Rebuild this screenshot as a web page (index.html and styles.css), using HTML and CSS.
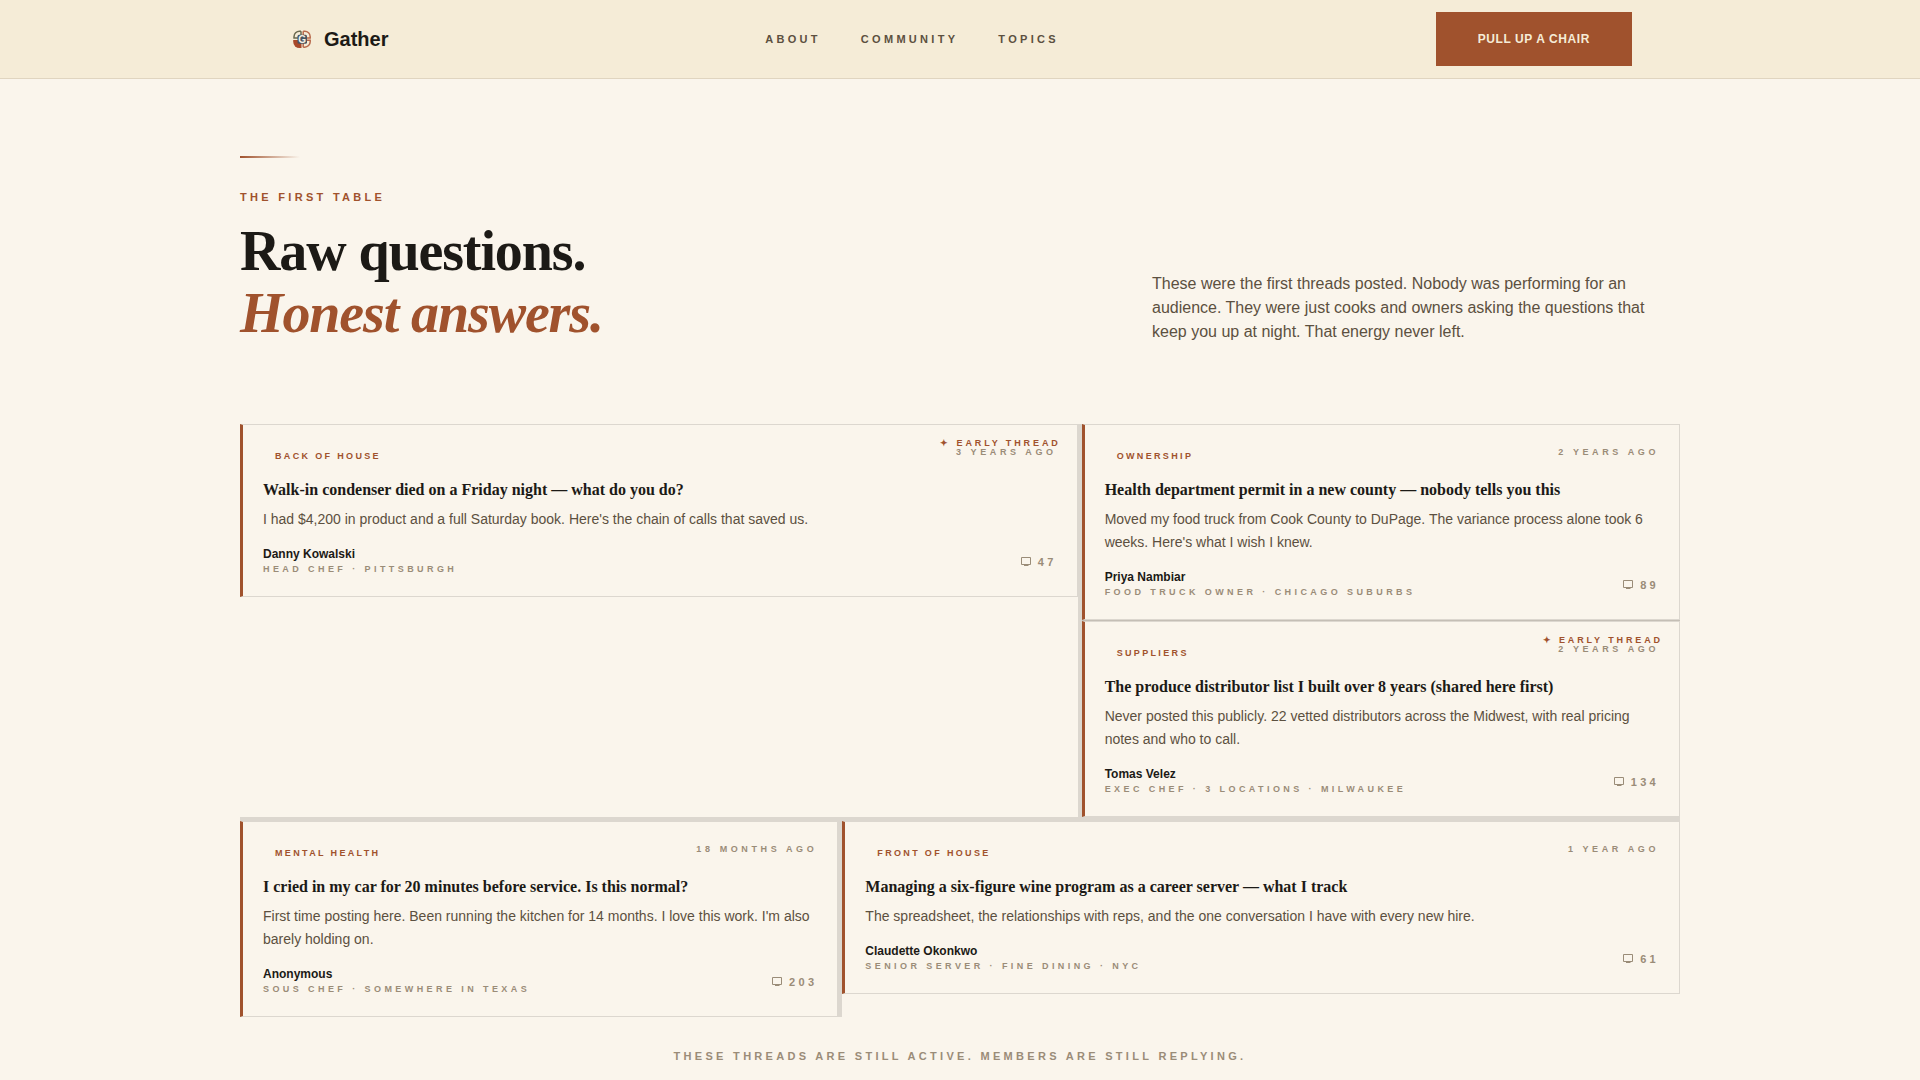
FILE: index.html
```html
<!DOCTYPE html>
<html lang="en">
<head>
  <meta charset="UTF-8">
  <meta name="viewport" content="width=device-width, initial-scale=1.0">
  <title>Gather</title>
  <link rel="stylesheet" href="styles.css">
</head>
<body>

  <!-- shared reply icon -->
  <svg class="sprite" aria-hidden="true">
    <symbol id="reply-icon" viewBox="0 0 12 12">
      <path d="M1.5 1.5h9v7h-9zM4 9.5h4.500" fill="none" stroke="currentColor"/>
    </symbol>
  </svg>

  <header class="site-header">
    <div class="nav-inner">
      <a class="brand" href="#">
        <svg class="brand-mark" viewBox="0 0 28 28" aria-hidden="true">
          <g fill="none" stroke-width="1.5">
            <path d="M13 6.200h-1.500a5.500 5.500 0 0 0-5.500 5.500V13h4M13 6.200V10" stroke="#6b6a50"/>
            <path d="M15.200 6.200h1.500a5.500 5.500 0 0 1 5.500 5.500V13h-4M15.200 6.200V10" stroke="#b86a4c"/>
            <path d="M15.200 22.200h1.500a5.500 5.500 0 0 0 5.500-5.500V15.200h-4M15.200 22.200V18" stroke="#b86a4c"/>
          </g>
          <path d="M5.200 15h8.300v8h-2a6.300 6.300 0 0 1-6.300-6.300z" fill="#a8492a"/>
          <rect x="9.500" y="9.700" width="9.500" height="9" rx="1.500" fill="#465663"/>
          <text class="brand-letter" x="14.200" y="17.700" text-anchor="middle">G</text>
        </svg>
        <span>Gather</span>
      </a>
      <nav class="nav-links">
        <a href="#about">About</a>
        <a href="#community">Community</a>
        <a href="#topics">Topics</a>
      </nav>
      <a class="btn" href="#join">Pull up a chair</a>
    </div>
  </header>

  <main class="container">
    <section class="intro">
      <div>
        <div class="rule"></div>
        <p class="eyebrow">The First Table</p>
        <h1>Raw questions.<br><em>Honest answers.</em></h1>
      </div>
      <p class="intro-text">These were the first threads posted. Nobody was performing for an audience. They were just cooks and owners asking the questions that keep you up at night. That energy never left.</p>
    </section>

    <section class="board">
      <div class="row wide-left">
        <div class="col">
          <article class="card">
            <span class="early">✦ Early thread</span>
            <div class="card-top">
              <span class="tag">Back of House</span>
              <time>3 years ago</time>
            </div>
            <h2>Walk-in condenser died on a Friday night — what do you do?</h2>
            <p class="excerpt">I had $4,200 in product and a full Saturday book. Here's the chain of calls that saved us.</p>
            <div class="card-foot">
              <div>
                <p class="author">Danny Kowalski</p>
                <p class="role">Head Chef · Pittsburgh</p>
              </div>
              <span class="replies"><svg aria-hidden="true"><use href="#reply-icon"/></svg>47</span>
            </div>
          </article>
        </div>
        <div class="col stack">
          <article class="card">
            <div class="card-top">
              <span class="tag">Ownership</span>
              <time>2 years ago</time>
            </div>
            <h2>Health department permit in a new county — nobody tells you this</h2>
            <p class="excerpt">Moved my food truck from Cook County to DuPage. The variance process alone took 6 weeks. Here's what I wish I knew.</p>
            <div class="card-foot">
              <div>
                <p class="author">Priya Nambiar</p>
                <p class="role">Food Truck Owner · Chicago Suburbs</p>
              </div>
              <span class="replies"><svg aria-hidden="true"><use href="#reply-icon"/></svg>89</span>
            </div>
          </article>
          <article class="card">
            <span class="early">✦ Early thread</span>
            <div class="card-top">
              <span class="tag">Suppliers</span>
              <time>2 years ago</time>
            </div>
            <h2>The produce distributor list I built over 8 years (shared here first)</h2>
            <p class="excerpt">Never posted this publicly. 22 vetted distributors across the Midwest, with real pricing notes and who to call.</p>
            <div class="card-foot">
              <div>
                <p class="author">Tomas Velez</p>
                <p class="role">Exec Chef · 3 Locations · Milwaukee</p>
              </div>
              <span class="replies"><svg aria-hidden="true"><use href="#reply-icon"/></svg>134</span>
            </div>
          </article>
        </div>
      </div>

      <div class="row wide-right">
        <div class="col">
          <article class="card">
            <div class="card-top">
              <span class="tag">Mental Health</span>
              <time>18 months ago</time>
            </div>
            <h2>I cried in my car for 20 minutes before service. Is this normal?</h2>
            <p class="excerpt">First time posting here. Been running the kitchen for 14 months. I love this work. I'm also barely holding on.</p>
            <div class="card-foot">
              <div>
                <p class="author">Anonymous</p>
                <p class="role">Sous Chef · Somewhere in Texas</p>
              </div>
              <span class="replies"><svg aria-hidden="true"><use href="#reply-icon"/></svg>203</span>
            </div>
          </article>
        </div>
        <div class="col">
          <article class="card">
            <div class="card-top">
              <span class="tag">Front of House</span>
              <time>1 year ago</time>
            </div>
            <h2>Managing a six-figure wine program as a career server — what I track</h2>
            <p class="excerpt">The spreadsheet, the relationships with reps, and the one conversation I have with every new hire.</p>
            <div class="card-foot">
              <div>
                <p class="author">Claudette Okonkwo</p>
                <p class="role">Senior Server · Fine Dining · NYC</p>
              </div>
              <span class="replies"><svg aria-hidden="true"><use href="#reply-icon"/></svg>61</span>
            </div>
          </article>
        </div>
      </div>
    </section>

    <p class="note">These threads are still active. Members are still replying.</p>
  </main>

</body>
</html>
```
FILE: styles.css
```css
:root {
  --cream: #faf5ec;
  --sand: #f5ecd7;
  --line: #dcd7cf;
  --rust: #a0522d;
  --ink: #1c1a16;
  --body: #5c5040;
  --muted: #9a8c78;
}

* {
  box-sizing: border-box;
  margin: 0;
  padding: 0;
}

body {
  background: var(--cream);
  color: var(--ink);
  font-family: "Liberation Sans", Arial, sans-serif;
  font-size: 16px;
  line-height: 24px;
}

a {
  color: inherit;
  text-decoration: none;
}

.sprite {
  display: none;
}

/* header */
.site-header {
  background: var(--sand);
  border-bottom: 1px solid #e0d5c0;
}

.nav-inner {
  max-width: 1440px;
  margin: 0 auto;
  padding: 12px 48px;
  display: flex;
  justify-content: space-between;
  align-items: center;
}

.brand {
  display: flex;
  align-items: center;
  gap: 8px;
  font-size: 20px;
  font-weight: bold;
}

.brand-mark {
  width: 28px;
  height: 28px;
}

.brand-letter {
  fill: #f7f1e6;
  font-size: 10px;
  font-weight: bold;
}

.nav-links {
  display: flex;
  gap: 40px;
  color: var(--body);
  font-size: 11px;
  font-weight: bold;
  letter-spacing: 0.3em;
  text-transform: uppercase;
}

.btn {
  padding: 15px 42px;
  background: var(--rust);
  color: var(--sand);
  font-size: 12px;
  font-weight: bold;
  letter-spacing: 0.05em;
  text-transform: uppercase;
}

/* intro */
.container {
  max-width: 1440px;
  margin: 0 auto;
}

.intro {
  display: grid;
  grid-template-columns: 5fr 3fr;
  gap: 32px;
  align-items: end;
  padding: 77px 0 80px;
}

.rule {
  width: 60px;
  height: 2px;
  margin-bottom: 32px;
  background: linear-gradient(to right, var(--rust), transparent);
}

.eyebrow {
  margin-bottom: 16px;
  color: var(--rust);
  font-size: 11px;
  font-weight: bold;
  line-height: 14px;
  letter-spacing: 0.3em;
  text-transform: uppercase;
}

h1 {
  font-family: "Liberation Serif", "Times New Roman", serif;
  font-size: 56px;
  line-height: 62px;
  letter-spacing: -0.02em;
}

h1 em {
  color: var(--rust);
}

.intro-text {
  color: var(--body);
}

/* threads: the board colour shows through the 4px gaps */
.board,
.row {
  display: grid;
  gap: 4px;
  background: var(--line);
}

.wide-left {
  grid-template-columns: 7fr 5fr;
}

.wide-right {
  grid-template-columns: 5fr 7fr;
}

.col {
  background: var(--cream);
}

.stack {
  display: grid;
  gap: 1px;
  background: #c4beb5;
}

.card {
  position: relative;
  padding: 20px;
  background: var(--cream);
  border: 1px solid var(--line);
  border-left: 3px solid var(--rust);
}

.card-top {
  display: flex;
  justify-content: space-between;
  align-items: flex-start;
  margin-bottom: 12px;
  font-size: 9px;
  font-weight: bold;
  line-height: 14px;
  text-transform: uppercase;
}

.tag {
  padding: 4px 12px;
  color: var(--rust);
  letter-spacing: 0.26em;
}

time {
  color: var(--muted);
  letter-spacing: 0.4em;
}

.early {
  position: absolute;
  top: 12px;
  right: 16px;
  color: var(--rust);
  font-size: 9px;
  font-weight: bold;
  line-height: 12px;
  letter-spacing: 0.32em;
  text-transform: uppercase;
}

h2 {
  margin-bottom: 8px;
  font-family: "Liberation Serif", "Times New Roman", serif;
  font-size: 16px;
  line-height: 21px;
}

.excerpt {
  margin-bottom: 16px;
  color: var(--body);
  font-size: 14px;
  line-height: 23px;
}

.card-foot {
  display: flex;
  justify-content: space-between;
  align-items: center;
}

.author {
  font-size: 12px;
  font-weight: bold;
  line-height: 15px;
}

.role {
  color: var(--muted);
  font-size: 9px;
  font-weight: bold;
  line-height: 14px;
  letter-spacing: 0.38em;
  text-transform: uppercase;
}

.replies {
  display: flex;
  align-items: center;
  gap: 6px;
  color: var(--muted);
  font-size: 11px;
  font-weight: bold;
  line-height: 14px;
  letter-spacing: 0.3em;
}

.replies svg {
  width: 12px;
  height: 12px;
}

.note {
  padding: 31px 0;
  color: var(--muted);
  font-size: 11px;
  font-weight: bold;
  line-height: 16px;
  letter-spacing: 0.3em;
  text-align: center;
  text-transform: uppercase;
}

@media (max-width: 900px) {
  .container {
    padding: 0 20px;
  }

  .nav-inner {
    padding: 12px 20px;
  }

  .nav-links {
    display: none;
  }

  .intro,
  .wide-left,
  .wide-right {
    grid-template-columns: 1fr;
  }
}
```
